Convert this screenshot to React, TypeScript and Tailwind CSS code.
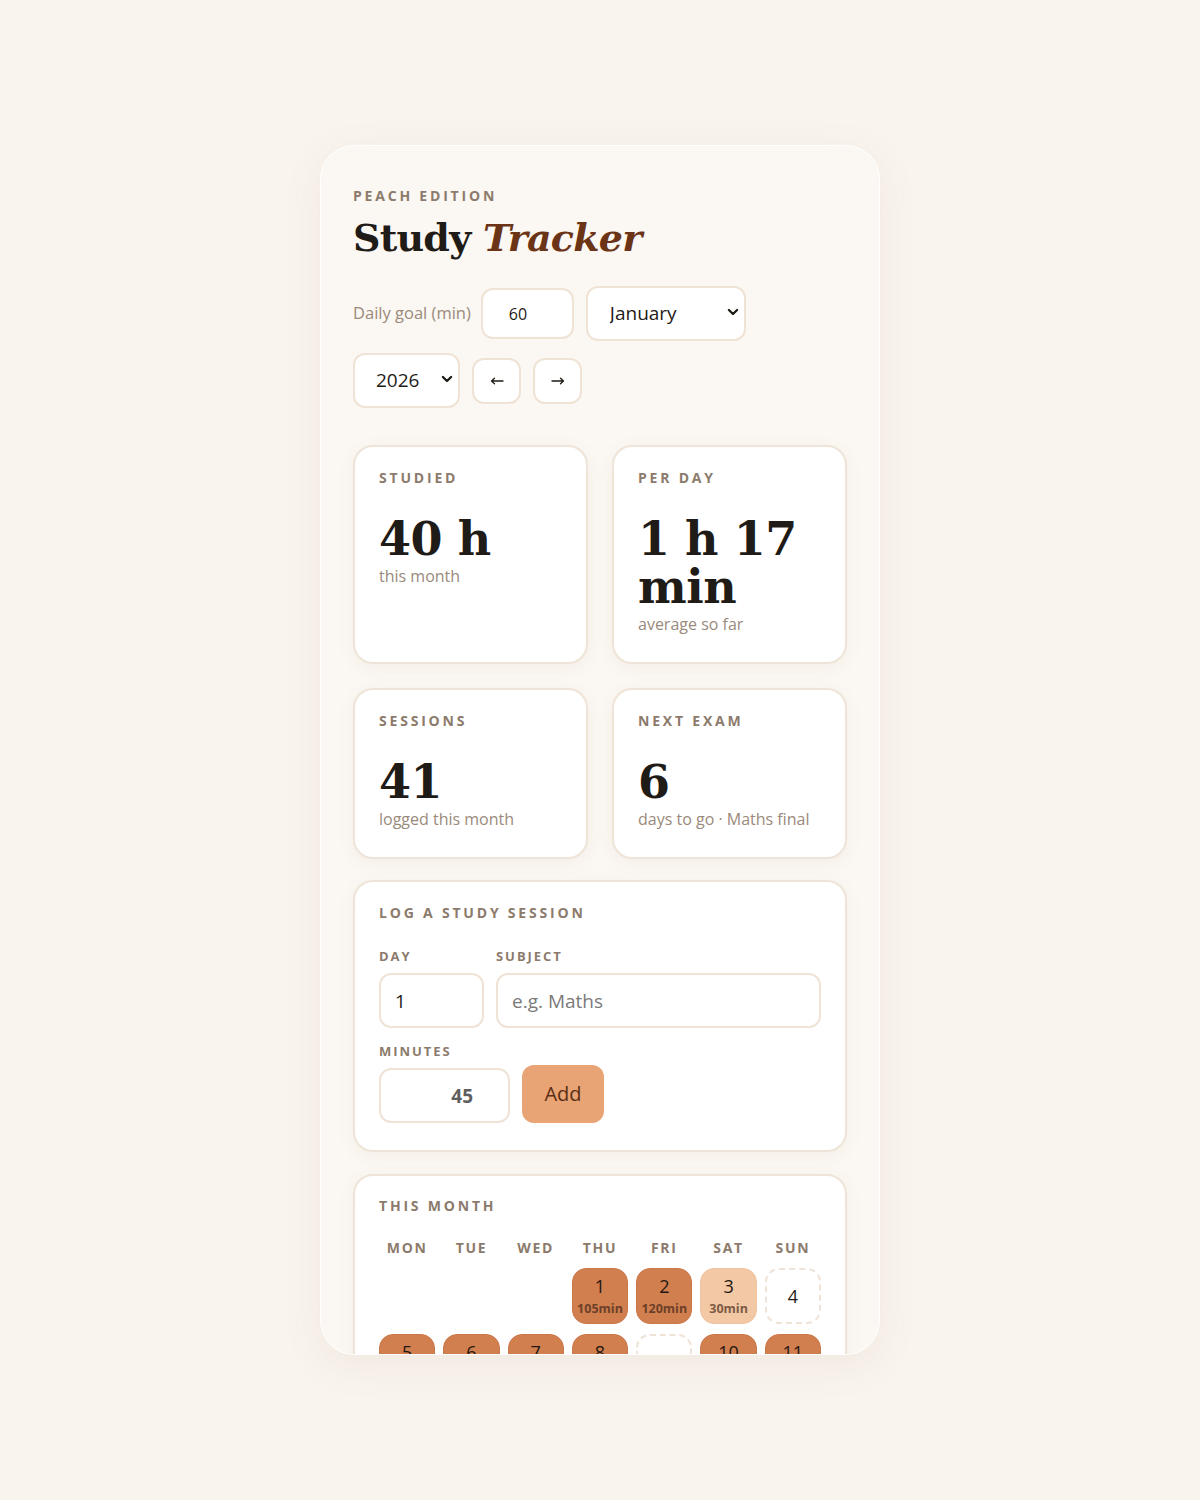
import React from "react";

const sans = "font-['Open_Sans',sans-serif]";
const serif = "font-['DejaVu_Serif',serif]";

function Chevron() {
  return (
    <svg width="14" height="14" viewBox="0 0 24 24" fill="none" stroke="#1f1b16" strokeWidth="4" strokeLinecap="round" strokeLinejoin="round">
      <path d="M5 8.5l7 7 7-7" />
    </svg>
  );
}

function Arrow({ dir }: { dir: "left" | "right" }) {
  return (
    <svg width="14" height="10" viewBox="0 0 14 10" fill="none" stroke="#1f1b16" strokeWidth="1.3" strokeLinecap="round" strokeLinejoin="round">
      {dir === "left" ? <path d="M13 5H1.5M4.5 2.3L1.5 5l3 2.7" /> : <path d="M1 5h11.5M9.5 2.3l3 2.7-3 2.7" />}
    </svg>
  );
}

function StatCard({ label, value, sub }: { label: string; value: string; sub: string }) {
  return (
    <div className="rounded-[20px] border-2 border-[#efe4d8] bg-white px-6 pb-[27px] pt-[21px] shadow-[0_4px_18px_rgba(140,100,60,0.06)]">
      <div className="text-[14px] font-bold leading-5 tracking-[0.2em] text-[#8c7b6c]">{label}</div>
      <div className={`${serif} mt-[27px] text-[46px] font-bold leading-[48px] tracking-[-0.01em] text-[#1f1b17]`}>{value}</div>
      <div className="mt-[2px] text-[16px] leading-[22px] text-[#9a8a7b]">{sub}</div>
    </div>
  );
}

const minutes: Record<number, number> = {
  1: 105, 2: 120, 3: 30, 4: 0, 5: 90, 6: 75, 7: 110, 8: 80, 9: 0, 10: 95, 11: 120,
  12: 60, 13: 85, 14: 70, 15: 100, 16: 45, 17: 90, 18: 120, 19: 75, 20: 60, 21: 90,
  22: 0, 23: 80, 24: 105, 25: 110, 26: 0, 27: 0, 28: 0, 29: 0, 30: 0, 31: 0,
};

function DayCell({ day }: { day: number }) {
  const m = minutes[day] ?? 0;
  if (m === 0) {
    return (
      <div className="flex aspect-square items-center justify-center rounded-[14px] border-2 border-dashed border-[#efe3d7] bg-white text-[18px] text-[#1f1b17]">
        {day}
      </div>
    );
  }
  const full = m >= 60;
  return (
    <div
      className={`flex aspect-square flex-col items-center justify-center rounded-[14px] border ${
        full ? "border-[#c9784a] bg-[#d17f4f]" : "border-[#f0c4a0] bg-[#f3c8a4]"
      }`}
    >
      <div className="text-[18px] leading-[22px] text-[#1f1712]">{day}</div>
      <div className={`mt-[4px] text-[12.5px] font-bold leading-4 ${full ? "text-[#6d4028]" : "text-[#7c5a44]"}`}>
        {m}min
      </div>
    </div>
  );
}

export default function App() {
  const weekdays = ["MON", "TUE", "WED", "THU", "FRI", "SAT", "SUN"];
  const cells: (number | null)[] = [null, null, null];
  for (let d = 1; d <= 31; d++) cells.push(d);

  return (
    <div className={`${sans} min-h-[1500px] bg-[#f9f4ee] pt-[145px]`}>
      <div className="mx-auto h-[1210px] w-[560px] overflow-hidden rounded-[34px] border border-white bg-[#fbf7f2] px-8 pt-10 shadow-[0_10px_40px_rgba(140,100,60,0.08)]">
        <div className="text-[14px] font-bold leading-5 tracking-[0.2em] text-[#8c7b6c]">PEACH EDITION</div>
        <h1 className={`${serif} mt-[8px] text-[38px] font-bold leading-[48px] tracking-[-0.02em] text-[#1f1b17]`}>
          Study <span className="italic text-[#6b3416]">Tracker</span>
        </h1>

        <div className="mt-[24px] flex flex-wrap items-center gap-x-3 gap-y-3">
          <span className="mr-[-2px] text-[16.5px] text-[#9a8a7b]">Daily goal (min)</span>
          <input
            type="number"
            defaultValue={60}
            className="h-[51px] w-[93px] rounded-[12px] border-2 border-[#efe3d6] bg-white pl-[26px] text-[16px] text-[#1f1b17] outline-none"
          />
          <div className="relative">
            <select
              defaultValue="January"
              className="h-[55px] w-[160px] appearance-none rounded-[12px] border-2 border-[#efe3d6] bg-white pl-[22px] text-[19px] text-[#1f1b17] outline-none"
            >
              <option>January</option>
              <option>February</option>
            </select>
            <span className="pointer-events-none absolute right-[6px] top-[19px]">
              <Chevron />
            </span>
          </div>
          <div className="relative">
            <select
              defaultValue="2026"
              className="h-[55px] w-[107px] appearance-none rounded-[12px] border-2 border-[#efe3d6] bg-white pl-[21px] text-[19px] text-[#1f1b17] outline-none"
            >
              <option>2025</option>
              <option>2026</option>
            </select>
            <span className="pointer-events-none absolute right-[6px] top-[19px]">
              <Chevron />
            </span>
          </div>
          <button className="flex h-[46px] w-[49px] items-center justify-center rounded-[12px] border-2 border-[#efe3d6] bg-white">
            <Arrow dir="left" />
          </button>
          <button className="flex h-[46px] w-[49px] items-center justify-center rounded-[12px] border-2 border-[#efe3d6] bg-white">
            <Arrow dir="right" />
          </button>
        </div>

        <div className="mt-[37px] grid grid-cols-2 gap-6">
          <StatCard label="STUDIED" value="40 h" sub="this month" />
          <StatCard label="PER DAY" value="1 h 17 min" sub="average so far" />
          <StatCard label="SESSIONS" value="41" sub="logged this month" />
          <StatCard label="NEXT EXAM" value="6" sub="days to go · Maths final" />
        </div>

        <div className="mt-[21px] rounded-[20px] border-2 border-[#efe4d8] bg-white px-6 pb-[27px] pt-[21px] shadow-[0_4px_18px_rgba(140,100,60,0.06)]">
          <div className="text-[14px] font-bold leading-5 tracking-[0.2em] text-[#8c7b6c]">LOG A STUDY SESSION</div>
          <div className="mt-[24px] flex gap-3">
            <div className="flex w-[105px] flex-col">
              <label className="text-[13px] font-bold leading-[18px] tracking-[0.15em] text-[#8c7b6c]">DAY</label>
              <input
                type="number"
                defaultValue={1}
                className="mt-2 h-[55px] w-[105px] rounded-[12px] border-2 border-[#efe3d6] bg-white pl-[14px] text-[19px] text-[#1f1b17] outline-none"
              />
            </div>
            <div className="flex flex-1 flex-col">
              <label className="text-[13px] font-bold leading-[18px] tracking-[0.15em] text-[#8c7b6c]">SUBJECT</label>
              <input
                type="text"
                placeholder="e.g. Maths"
                className="mt-2 h-[55px] w-full rounded-[12px] border-2 border-[#efe3d6] bg-white pl-[14px] text-[19px] text-[#1f1b17] outline-none placeholder:text-[#7a7a7a]"
              />
            </div>
          </div>
          <div className="mt-[14px] text-[13px] font-bold leading-[18px] tracking-[0.15em] text-[#8c7b6c]">MINUTES</div>
          <div className="mt-[5px] flex items-end gap-3">
            <input
              type="number"
              defaultValue={45}
              className="h-[55px] w-[131px] rounded-[12px] border-2 border-[#efe3d6] bg-white pr-[20px] text-right text-[19px] font-bold text-[#5f5f5f] outline-none"
            />
            <button className="h-[58px] w-[82px] rounded-[12px] bg-[#e9a476] text-[20px] font-medium text-[#5a2f14]">Add</button>
          </div>
        </div>

        <div className="mt-[22px] rounded-[20px] border-2 border-[#efe4d8] bg-white p-6 pt-[20px] shadow-[0_4px_18px_rgba(140,100,60,0.06)]">
          <div className="text-[14px] font-bold leading-5 tracking-[0.2em] text-[#8c7b6c]">THIS MONTH</div>
          <div className="mt-[22px] grid grid-cols-7 gap-2">
            {weekdays.map((w) => (
              <div key={w} className="text-center text-[14px] font-bold leading-5 tracking-[0.12em] text-[#8c7b6c]">
                {w}
              </div>
            ))}
          </div>
          <div className="mt-[10px] grid grid-cols-7 gap-x-2 gap-y-[10px]">
            {cells.map((d, i) => (d === null ? <div key={`e${i}`} /> : <DayCell key={d} day={d} />))}
          </div>
        </div>
      </div>
    </div>
  );
}
